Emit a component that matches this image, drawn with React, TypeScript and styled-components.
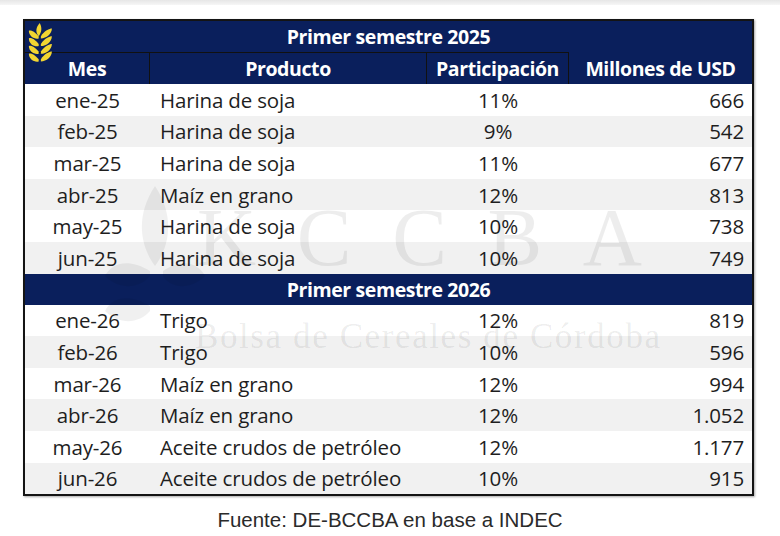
import * as React from "react";
import styled, { createGlobalStyle } from "styled-components";

interface RowInfo {
  mes: string;
  producto: string;
  part: string;
  usd: string;
}

const sem2025: RowInfo[] = [
  { mes: "ene-25", producto: "Harina de soja", part: "11%", usd: "666" },
  { mes: "feb-25", producto: "Harina de soja", part: "9%", usd: "542" },
  { mes: "mar-25", producto: "Harina de soja", part: "11%", usd: "677" },
  { mes: "abr-25", producto: "Maíz en grano", part: "12%", usd: "813" },
  { mes: "may-25", producto: "Harina de soja", part: "10%", usd: "738" },
  { mes: "jun-25", producto: "Harina de soja", part: "10%", usd: "749" },
];

const sem2026: RowInfo[] = [
  { mes: "ene-26", producto: "Trigo", part: "12%", usd: "819" },
  { mes: "feb-26", producto: "Trigo", part: "10%", usd: "596" },
  { mes: "mar-26", producto: "Maíz en grano", part: "12%", usd: "994" },
  { mes: "abr-26", producto: "Maíz en grano", part: "12%", usd: "1.052" },
  { mes: "may-26", producto: "Aceite crudos de petróleo", part: "12%", usd: "1.177" },
  { mes: "jun-26", producto: "Aceite crudos de petróleo", part: "10%", usd: "915" },
];

// small wheat ear in the header corner
const WheatIcon: React.FC<{ color: string }> = ({ color }) => (
  <svg width="30" height="46" viewBox="0 0 26 42">
    <path d="M11 1 C7 5 7 10 10 13 C13 9 13 5 11 1 Z" fill={color} />
    {[0, 1, 2, 3].map((i) => (
      <g key={i} transform={`translate(0 ${i * 7})`}>
        <path d="M10 13 C6 8 2 7 1 8 C1 13 6 16 10 15 Z" fill={color} />
        <path d="M12 13 C15 8 20 6 22 6 C22 11 17 15 12 15 Z" fill={color} />
      </g>
    ))}
  </svg>
);

const App: React.FC = () => {
  const renderRows = (rows: RowInfo[]) =>
    rows.map((row, i) => (
      <Row key={row.mes} $alt={i % 2 === 1}>
        <Cell $align="center">{row.mes}</Cell>
        <Cell $align="left">{row.producto}</Cell>
        <Cell $align="center">{row.part}</Cell>
        <Cell $align="right">{row.usd}</Cell>
      </Row>
    ));

  return (
    <Page>
      <GlobalStyle />
      <TopStrip />
      <Table>
        <Watermark>
          <WatermarkLeaves viewBox="0 0 100 170" width="100" height="170">
            <path d="M50 10 C30 40 35 70 50 90 C65 70 70 40 50 10 Z" />
            <path d="M45 95 C20 80 5 90 0 100 C15 115 35 112 45 100 Z" />
            <path d="M45 130 C20 115 5 125 0 135 C15 150 35 147 45 135 Z" />
            <path d="M58 95 C80 80 95 90 100 100 C85 115 65 112 58 100 Z" />
          </WatermarkLeaves>
          <WatermarkLetters>
            <span>K</span>
            <span>C</span>
            <span>C</span>
            <span>B</span>
            <span>A</span>
          </WatermarkLetters>
          <WatermarkName>Bolsa de Cereales de Córdoba</WatermarkName>
        </Watermark>
        <LogoSpot>
          <WheatIcon color="#f2d531" />
        </LogoSpot>
        <TitleRow>Primer semestre 2025</TitleRow>
        <HeadRow>
          <HeadCell $lined>Mes</HeadCell>
          <HeadCell $lined>Producto</HeadCell>
          <HeadCell $lined>Participación</HeadCell>
          <HeadCell>Millones de USD</HeadCell>
        </HeadRow>
        {renderRows(sem2025)}
        <TitleRow>Primer semestre 2026</TitleRow>
        {renderRows(sem2026)}
      </Table>
      <Source>Fuente: DE-BCCBA en base a INDEC</Source>
    </Page>
  );
};

const GlobalStyle = createGlobalStyle`
  body {
    margin: 0;
    background: #ffffff;
  }
`;

const Page = styled.div`
  width: 780px;
  height: 536px;
  display: flex;
  flex-direction: column;
  align-items: flex-start;
  font-family: "Open Sans", "Noto Sans", sans-serif;
`;

const TopStrip = styled.div`
  width: 100%;
  height: 5px;
  background: linear-gradient(#e6e6e6, #f6f6f6);
  margin-bottom: 14px;
`;

const Table = styled.div`
  position: relative;
  margin-left: 23px;
  width: 731px;
  border: 2px solid #141414;
  box-sizing: border-box;
  box-shadow: 1px 1px 2px rgba(0, 0, 0, 0.35);
  display: flex;
  flex-direction: column;
  overflow: hidden;
`;

const columns = "125px 277px 142px 1fr";

const TitleRow = styled.div`
  height: 31px;
  background: #0a1f5c;
  color: #ffffff;
  font-weight: 700;
  font-size: 19.5px;
  display: flex;
  align-items: center;
  justify-content: center;
  letter-spacing: -0.4px;
`;

const HeadRow = styled.div`
  display: grid;
  grid-template-columns: ${columns};
  height: 32px;
  background: #0a1f5c;
`;

const HeadCell = styled.div<{ $lined?: boolean }>`
  color: #ffffff;
  font-weight: 700;
  font-size: 19.5px;
  letter-spacing: -0.4px;
  display: flex;
  align-items: center;
  justify-content: center;
  border-top: ${(p) => (p.$lined ? "1.5px solid #111" : "none")};
  border-right: ${(p) => (p.$lined ? "1.5px solid #111" : "none")};
`;

const Row = styled.div<{ $alt: boolean }>`
  display: grid;
  grid-template-columns: ${columns};
  height: 31.6px;
  background: ${(p) => (p.$alt ? "#f1f1f1" : "transparent")};
`;

const Cell = styled.div<{ $align: "left" | "center" | "right" }>`
  display: flex;
  align-items: center;
  justify-content: ${(p) =>
    p.$align === "left" ? "flex-start" : p.$align === "right" ? "flex-end" : "center"};
  padding: ${(p) =>
    p.$align === "left" ? "0 0 0 10px" : p.$align === "right" ? "0 8px 0 0" : "0"};
  color: #1e1e1e;
  font-size: 20.5px;
  letter-spacing: -0.15px;
`;

const LogoSpot = styled.div`
  position: absolute;
  left: 2px;
  top: 1px;
  z-index: 2;
`;

const Watermark = styled.div`
  position: absolute;
  inset: 0;
  pointer-events: none;
  z-index: 1;
`;

const WatermarkLeaves = styled.svg`
  position: absolute;
  left: 80px;
  top: 155px;
  fill: rgba(0, 0, 0, 0.06);
`;

const WatermarkLetters = styled.div`
  position: absolute;
  left: 172px;
  top: 170px;
  width: 445px;
  display: flex;
  justify-content: space-between;
  font-family: "Liberation Serif", serif;
  font-size: 82px;
  color: rgba(0, 0, 0, 0.07);
`;

const WatermarkName = styled.div`
  position: absolute;
  left: 170px;
  top: 296px;
  font-family: "Liberation Serif", serif;
  font-size: 35px;
  letter-spacing: 1.6px;
  color: rgba(0, 0, 0, 0.08);
`;

const Source = styled.div`
  align-self: center;
  margin-top: 12px;
  font-family: "Liberation Sans", Arial, sans-serif;
  font-size: 20.5px;
  color: #2a2a2a;
`;

export default App;
